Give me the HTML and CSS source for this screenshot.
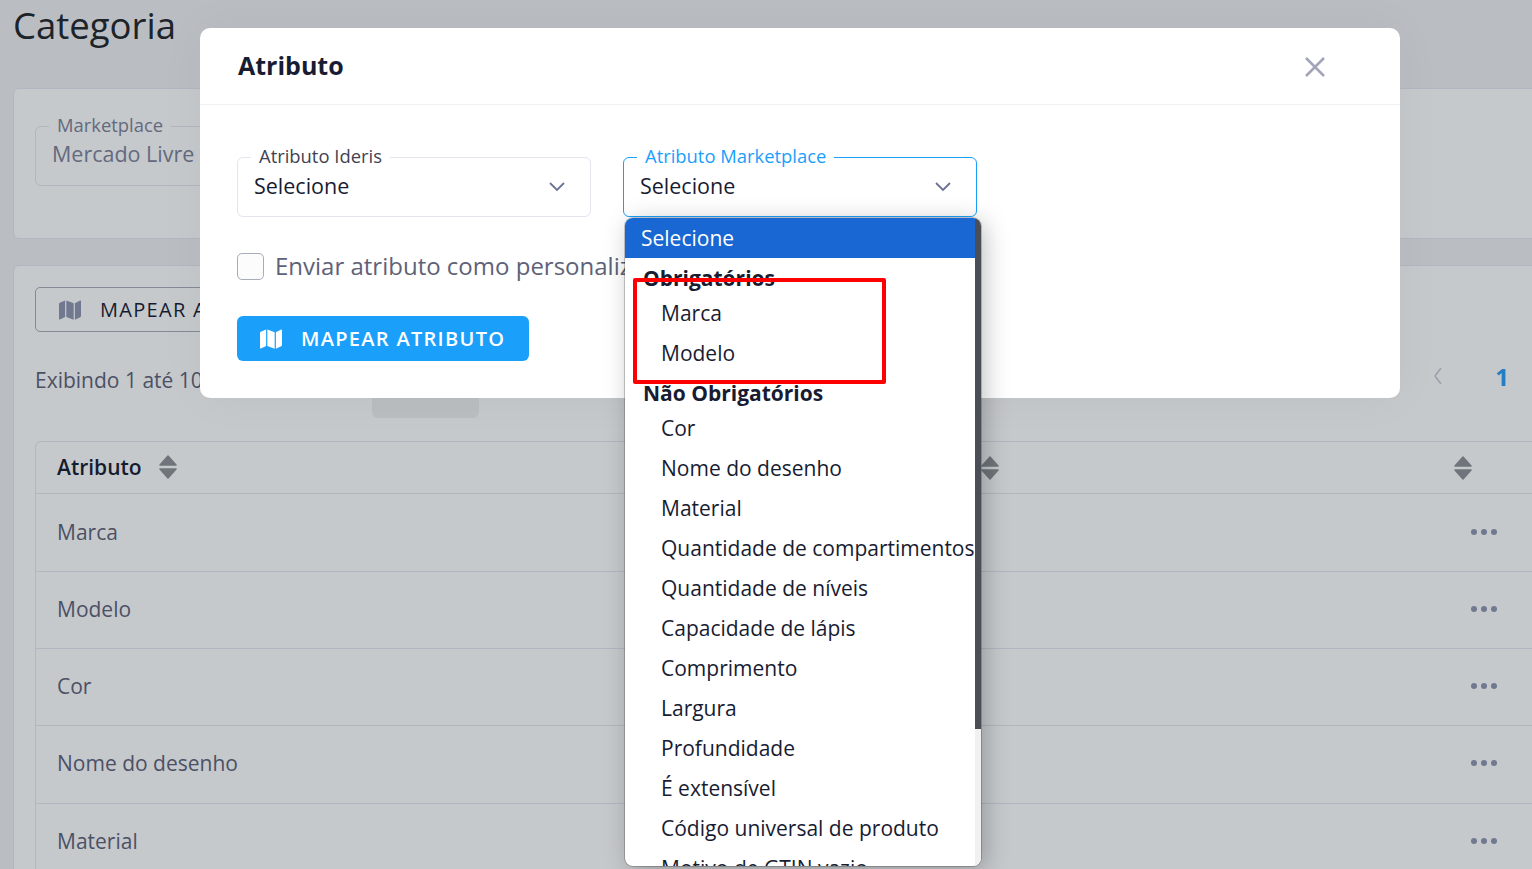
FILE: index.html
```html
<!DOCTYPE html>
<html>
	<head>
		<meta charset="UTF-8">
		<title>Categoria</title>
		<link rel="stylesheet" href="styles.css">
	</head>
	<body>
		<div class="page">
			<h1 class="pageTitle">Categoria</h1>

			<div class="card filterCard">
				<div class="field fieldDim">
					<span class="fieldLabel">Marketplace</span>
					<span class="fieldValue">Mercado Livre</span>
				</div>
			</div>

			<div class="card listCard">
				<button class="outlineBtn">
					<svg class="mapIcon" viewBox="0 0 576 512" preserveAspectRatio="none"><path d="M0 117.660v346.320c0 11.320 11.430 19.060 21.940 14.860L160 416V32L20.120 87.950A32 32 0 0 0 0 117.660zM192 416l192 64V96L192 32v384zM554.060 33.160L416 96v384l139.880-55.950A32 32 0 0 0 576 394.340V48.020c0-11.320-11.430-19.060-21.940-14.860z"/></svg>
					MAPEAR ATRIBUTO
				</button>

				<div class="listInfo">
					<span>Exibindo 1 até 10 de 24 registros</span>
					<div class="pager">
						<svg class="pagerPrev" viewBox="0 0 10 20"><path d="M8 2L2 10l6 8"/></svg>
						<span class="pagerNum">1</span>
					</div>
				</div>

				<div class="table">
					<div class="row rowHead">
						<span class="colName">Atributo
							<svg class="sortIcon" viewBox="0 0 18 24"><path d="M9 1l8 9H1zM1 14h16l-8 9z"/></svg>
						</span>
						<svg class="sortIcon sortMid" viewBox="0 0 18 24"><path d="M9 1l8 9H1zM1 14h16l-8 9z"/></svg>
						<svg class="sortIcon sortEnd" viewBox="0 0 18 24"><path d="M9 1l8 9H1zM1 14h16l-8 9z"/></svg>
					</div>
					<div class="row"><span class="colName">Marca</span><span class="dots"><i></i><i></i><i></i></span></div>
					<div class="row"><span class="colName">Modelo</span><span class="dots"><i></i><i></i><i></i></span></div>
					<div class="row"><span class="colName">Cor</span><span class="dots"><i></i><i></i><i></i></span></div>
					<div class="row"><span class="colName">Nome do desenho</span><span class="dots"><i></i><i></i><i></i></span></div>
					<div class="row"><span class="colName">Material</span><span class="dots"><i></i><i></i><i></i></span></div>
				</div>
			</div>
		</div>

		<div class="overlay"></div>
		<div class="ghostTab"></div>

		<div class="modal">
			<div class="modalHead">
				<span class="modalTitle">Atributo</span>
				<svg class="modalClose" viewBox="0 0 20 20"><path d="M1 1l18 18M19 1L1 19"/></svg>
			</div>
			<div class="modalBody">
				<div class="fieldRow">
					<div class="field">
						<span class="fieldLabel">Atributo Ideris</span>
						<span class="fieldValue">Selecione</span>
						<svg class="chevron" viewBox="0 0 16 10"><path d="M1 1l7 7 7-7"/></svg>
					</div>
					<div class="field fieldFocus">
						<span class="fieldLabel">Atributo Marketplace</span>
						<span class="fieldValue">Selecione</span>
						<svg class="chevron" viewBox="0 0 16 10"><path d="M1 1l7 7 7-7"/></svg>
					</div>
				</div>
				<label class="checkRow">
					<span class="checkBox"></span>
					Enviar atributo como personalizado
				</label>
				<button class="primaryBtn">
					<svg class="mapIcon" viewBox="0 0 576 512" preserveAspectRatio="none"><path d="M0 117.660v346.320c0 11.320 11.430 19.060 21.940 14.860L160 416V32L20.120 87.950A32 32 0 0 0 0 117.660zM192 416l192 64V96L192 32v384zM554.060 33.160L416 96v384l139.880-55.950A32 32 0 0 0 576 394.340V48.020c0-11.320-11.430-19.060-21.940-14.860z"/></svg>
					MAPEAR ATRIBUTO
				</button>
			</div>
		</div>

		<div class="dropdown">
			<div class="dropList">
				<div class="opt optActive">Selecione</div>
				<div class="optGroup">Obrigatórios</div>
				<div class="opt optSub">Marca</div>
				<div class="opt optSub">Modelo</div>
				<div class="optGroup">Não Obrigatórios</div>
				<div class="opt optSub">Cor</div>
				<div class="opt optSub">Nome do desenho</div>
				<div class="opt optSub">Material</div>
				<div class="opt optSub">Quantidade de compartimentos</div>
				<div class="opt optSub">Quantidade de níveis</div>
				<div class="opt optSub">Capacidade de lápis</div>
				<div class="opt optSub">Comprimento</div>
				<div class="opt optSub">Largura</div>
				<div class="opt optSub">Profundidade</div>
				<div class="opt optSub">É extensível</div>
				<div class="opt optSub">Código universal de produto</div>
				<div class="opt optSub">Motivo de GTIN vazio</div>
			</div>
			<div class="dropScroll"><div class="dropThumb"></div></div>
		</div>

		<div class="redMark"></div>
	</body>
</html>
```

FILE: styles.css
```css
* {
	box-sizing: border-box;
}

html,
body {
	margin: 0;
	padding: 0;
	height: 100%;
	overflow: hidden;
}

body {
	font-family: "Open Sans", "Noto Sans", sans-serif;
	color: #181c32;
	background: #f0f1f3;
	position: relative;
}

.page {
	padding: 0 0 0 13px;
	width: 1560px;
}

.pageTitle {
	margin: 0;
	height: 88px;
	font-size: 36.500px;
	line-height: 50px;
	font-weight: 400;
	color: #212529;
}

.card {
	background: #fff;
	border: 1px solid #e4e6ef;
	border-radius: 6px;
}

.filterCard {
	height: 151px;
	padding: 37px 21px 0;
	margin-bottom: 26px;
}

.listCard {
	padding: 21px 21px 0;
}

.outlineBtn {
	display: flex;
	align-items: center;
	gap: 19px;
	width: 300px;
	height: 45px;
	padding: 0 23px;
	background: #fff;
	border: 1px solid #a8abb8;
	border-radius: 5px;
	font-family: inherit;
	font-size: 20px;
	letter-spacing: 1.300px;
	white-space: nowrap;
	color: #181c32;
}

.outlineBtn .mapIcon {
	fill: #8e96b0;
}

.mapIcon {
	width: 22px;
	height: 22px;
	flex: none;
}

.listInfo {
	display: flex;
	justify-content: space-between;
	align-items: center;
	height: 40px;
	margin-top: 28px;
	font-size: 21px;
	color: #5e6278;
}

.pager {
	display: flex;
	align-items: center;
	gap: 52px;
	margin-right: 29px;
	margin-top: -8px;
}

.pagerPrev {
	width: 10px;
	height: 20px;
	fill: none;
	stroke: #c5c9d6;
	stroke-width: 1.500;
}

.pagerNum {
	font-size: 24px;
	font-weight: 700;
	color: #2a9df4;
}

.table {
	margin-top: 41.400px;
	border: 1px solid #e4e6ef;
	border-radius: 6px 0 0 0;
}

.row {
	display: flex;
	align-items: center;
	justify-content: space-between;
	height: 77.300px;
	padding: 0 40px 2px 21px;
	border-bottom: 1px solid #e4e6ef;
	font-size: 21px;
	color: #5e6278;
	position: relative;
}

.rowHead {
	height: 52px;
	font-weight: 600;
	color: #181c32;
}

.colName {
	display: flex;
	align-items: center;
	gap: 17px;
}

.sortIcon {
	width: 18px;
	height: 24px;
	fill: #8d9194;
	stroke: #8d9194;
	stroke-width: 1.500;
	stroke-linejoin: round;
	flex: none;
}

.sortMid {
	position: absolute;
	left: 945px;
	top: 14px;
}

.sortEnd {
	position: absolute;
	left: 1418px;
	top: 14px;
}

.dots {
	display: flex;
	gap: 4px;
}

.dots i {
	width: 6px;
	height: 6px;
	border-radius: 50%;
	background: #8e96b0;
}

.overlay {
	position: absolute;
	inset: 0;
	background: rgba(15, 30, 40, .24);
}

.ghostTab {
	position: absolute;
	left: 372px;
	top: 380px;
	width: 107px;
	height: 38px;
	border-radius: 0 0 6px 6px;
	background: rgba(0, 0, 0, .05);
}

.modal {
	position: absolute;
	left: 200px;
	top: 28px;
	width: 1200px;
	height: 370px;
	background: #fff;
	border-radius: 10px;
	box-shadow: 0 0 50px rgba(0, 0, 0, .04);
}

.modalHead {
	display: flex;
	align-items: center;
	justify-content: space-between;
	height: 77px;
	padding: 0 75px 0 38px;
	border-bottom: 1px solid #eff2f5;
}

.modalTitle {
	font-size: 25px;
	font-weight: 700;
	color: #181c32;
	margin-top: -2px;
}

.modalClose {
	width: 20px;
	height: 20px;
	margin-top: 2px;
	fill: none;
	stroke: #a1a5b7;
	stroke-width: 2.500;
}

.modalBody {
	padding: 52px 37px 0;
}

.fieldRow {
	display: flex;
	gap: 32px;
}

.field {
	position: relative;
	width: 354px;
	height: 60px;
	border: 1px solid #e4e6ef;
	border-radius: 6px;
	padding: 13px 16px 0;
	background: #fff;
}

.fieldDim {
	width: 300px;
	padding-top: 12px;
}

.fieldLabel {
	position: absolute;
	left: 13px;
	top: -14px;
	padding: 0 8px;
	background: #fff;
	font-size: 18.400px;
	line-height: 24px;
	color: #3f4254;
}

.fieldValue {
	font-size: 21.500px;
	line-height: 30px;
	color: #181c32;
	display: block;
}

.fieldDim .fieldLabel {
	color: #7e8299;
}

.fieldDim .fieldValue {
	color: #7e8299;
}

.chevron {
	position: absolute;
	right: 25px;
	top: 24px;
	width: 16px;
	height: 10px;
	fill: none;
	stroke: #6c7293;
	stroke-width: 1.800;
}

.fieldFocus {
	border-color: #1aa0fb;
}

.fieldFocus .fieldLabel {
	color: #1aa0fb;
}

.checkRow {
	display: flex;
	align-items: center;
	gap: 11px;
	margin-top: 34px;
	font-size: 24px;
	line-height: 30px;
	color: #5e6278;
}

.checkBox {
	width: 27px;
	height: 27px;
	border: 1px solid #a8abb8;
	border-radius: 5px;
	background: #fcfcfd;
}

.primaryBtn {
	display: flex;
	align-items: center;
	gap: 19px;
	height: 45px;
	width: 292px;
	margin-top: 35px;
	padding: 0 23px;
	border: 0;
	border-radius: 6px;
	background: #1aa0fb;
	color: #fff;
	font-family: inherit;
	font-size: 20px;
	font-weight: 600;
	letter-spacing: 1.300px;
	white-space: nowrap;
}

.primaryBtn .mapIcon {
	fill: #fff;
}

.dropdown {
	position: absolute;
	left: 625px;
	top: 218px;
	width: 356px;
	height: 648px;
	display: flex;
	background: #fff;
	border-radius: 8px;
	overflow: hidden;
	box-shadow: 0 0 0 1px rgba(0, 0, 0, .2), 4px 4px 24px rgba(0, 0, 0, .25);
}

.dropList {
	flex: 1;
	min-width: 0;
	overflow: hidden;
	font-size: 21px;
	color: #181c32;
}

.opt {
	height: 40px;
	line-height: 40px;
	white-space: nowrap;
}

.optActive {
	background: #1967d2;
	color: #fff;
	padding-left: 16px;
}

.optGroup {
	height: 35px;
	line-height: 40px;
	padding-left: 18px;
	font-weight: 700;
}

.optSub {
	padding-left: 36px;
}

.dropScroll {
	width: 6px;
	background: #f1f1f1;
}

.dropThumb {
	height: 511px;
	background: #4a4f57;
}

.redMark {
	position: absolute;
	left: 633px;
	top: 278px;
	width: 253px;
	height: 106px;
	border: 4px solid #f00;
	border-radius: 2px;
}
```
